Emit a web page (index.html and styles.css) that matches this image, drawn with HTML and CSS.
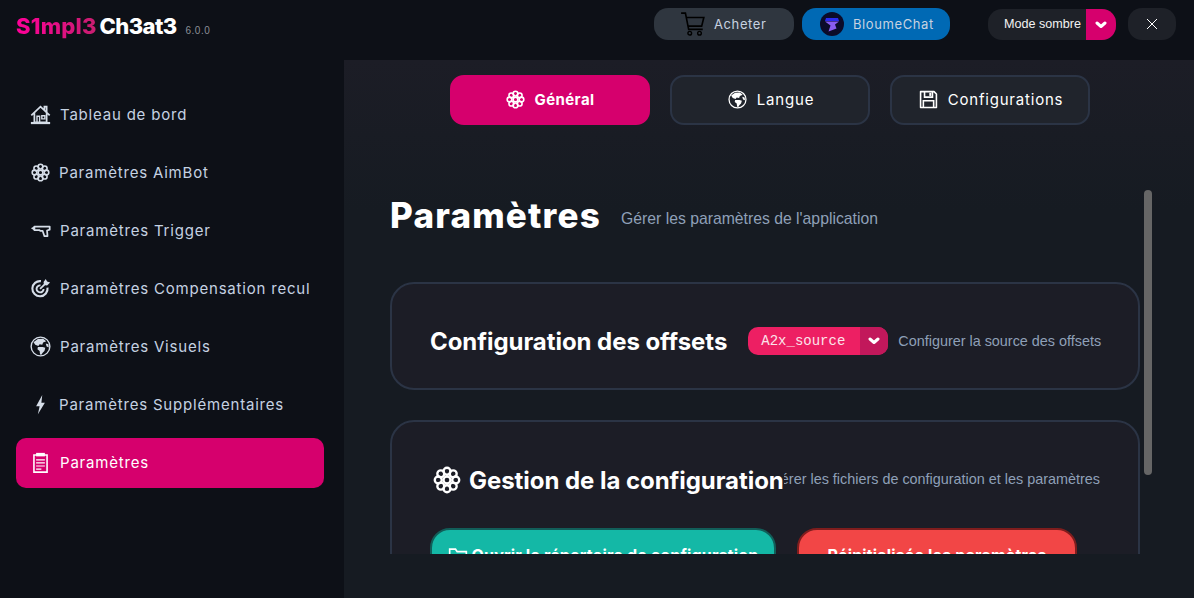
FILE: index.html
```html
<!DOCTYPE html>
<html lang="fr">
<head>
	<meta charset="utf-8" />
	<title>S1mpl3 Ch3at3</title>
	<link rel="stylesheet" href="styles.css">
</head>
<body>
	<svg class="sprites" width="0" height="0">
		<symbol id="flower" viewBox="0 0 24 24">
			<g fill="none" stroke="currentColor" stroke-width="2">
				<circle cx="12" cy="12" r="3"/>
				<circle cx="12" cy="4.500" r="3"/>
				<circle cx="12" cy="19.500" r="3"/>
				<circle cx="4.500" cy="12" r="3"/>
				<circle cx="19.500" cy="12" r="3"/>
				<circle cx="6.700" cy="6.700" r="3"/>
				<circle cx="17.300" cy="6.700" r="3"/>
				<circle cx="6.700" cy="17.300" r="3"/>
				<circle cx="17.300" cy="17.300" r="3"/>
			</g>
		</symbol>
		<symbol id="globe" viewBox="0 0 24 24">
			<circle cx="12" cy="12" r="10.700" fill="none" stroke="currentColor" stroke-width="1.600"/>
			<path fill="currentColor" d="M4 7 9 3.500l6-.5 3.500 3-3.500 1.500-1 2.500-3-.5-1.500 2L6 10zM9 12.500h5.500l3 1-1 3.500-2 2-1.500 2.500-1.500-.5-.5-4-2.500-2zM18 8.500l3 1 .5 3.500-2.500-1z"/>
		</symbol>
		<symbol id="chevron" viewBox="0 0 12 8">
			<path fill="none" stroke="currentColor" stroke-width="3" stroke-linecap="round" stroke-linejoin="round" d="M2 2l4 3.500L10 2"/>
		</symbol>
	</svg>

	<div class="app">
		<header class="topbar">
			<div class="brand">
				<span class="brand-pink">S1mpl3</span>
				<span class="brand-white">Ch3at3</span>
				<span class="brand-version">6.0.0</span>
			</div>
			<div class="top-actions">
				<a class="pill pill-grey">
					<svg class="cart" viewBox="0 0 24 24"><path fill="none" stroke="#000" stroke-width="1.500" d="M1 2h4l3 15h13M6 6h16l-2 8H7.500"/><circle cx="9" cy="20.500" r="1.700" fill="none" stroke="#000" stroke-width="1.300"/><circle cx="18" cy="20.500" r="1.700" fill="none" stroke="#000" stroke-width="1.300"/></svg>
					Acheter
				</a>
				<a class="pill pill-blue">
					<svg class="bloume" viewBox="0 0 24 24"><circle cx="12" cy="12" r="12" fill="#0b0b2a"/><path fill="#2b2bf0" d="M6 6h12l1 3H5z"/><path fill="#8a5cf0" d="M5 9.500h14l-4 3 1.500 4-8 3 2-6z"/></svg>
					BloumeChat
				</a>
				<div class="theme-select">
					<span class="theme-label">Mode sombre</span>
					<span class="theme-arrow"><svg class="chev"><use href="#chevron"/></svg></span>
				</div>
				<button class="close-btn">
					<svg width="12" height="12" viewBox="0 0 12 12"><path stroke="#fff" stroke-width="1" d="M1 1l10 10M11 1L1 11"/></svg>
				</button>
			</div>
		</header>

		<div class="body-row">
			<nav class="sidebar">
				<a class="nav-item">
					<svg class="nav-icon" viewBox="0 0 24 24"><path fill="none" stroke="currentColor" stroke-width="2" d="M1.500 13 12 3l10.500 10M5 10.500V21h14V10.500M16.500 6.500V3h2.500v6"/><path fill="currentColor" d="M1 20.500h22V23H1z"/><path fill="none" stroke="currentColor" stroke-width="1.600" d="M8 21v-7h3v7M13.500 13.500h3.500v3.500h-3.500z"/></svg>
					Tableau de bord
				</a>
				<a class="nav-item nudge">
					<svg class="nav-icon flower-thin"><use href="#flower"/></svg>
					Paramètres AimBot
				</a>
				<a class="nav-item">
					<svg class="nav-icon" viewBox="0 0 24 24"><path fill="none" stroke="currentColor" stroke-width="2" stroke-linejoin="round" d="M5 7.500h17.500V11l-3 1 .5 6.500h-3.500L14.500 12.500H12L10.500 11.500H5z"/><path fill="currentColor" d="M1 9.500l4-2.500v5z"/></svg>
					Paramètres Trigger
				</a>
				<a class="nav-item">
					<svg class="nav-icon" viewBox="0 0 24 24"><g fill="none" stroke="currentColor"><path stroke-width="2.400" d="M20 11a8.700 8.700 0 1 1-7.500-7.400"/><path stroke-width="2.200" d="M15.500 12.500a4 4 0 1 1-3.500-4"/><path stroke-width="2" d="M11.500 12.500l7-7"/></g><path fill="currentColor" d="M18 1l1.500 3L23 5l-3.500 3.500-3.500-.5-.5-3.500z"/></svg>
					Paramètres Compensation recul
				</a>
				<a class="nav-item">
					<svg class="nav-icon"><use href="#globe"/></svg>
					Paramètres Visuels
				</a>
				<a class="nav-item nudge">
					<svg class="nav-icon" viewBox="0 0 24 24"><path fill="currentColor" d="M14 1 7 14h4l-2 9 8-13h-4z"/></svg>
					Paramètres Supplémentaires
				</a>
				<a class="nav-item active">
					<svg class="nav-icon" viewBox="0 0 24 24"><path fill="none" stroke="currentColor" stroke-width="1.800" d="M4.500 3.500h15V23h-15z"/><path fill="currentColor" d="M7 1h10v4H7z"/><path stroke="currentColor" stroke-width="1.400" d="M7 9h10M7 12.500h10M7 16h10M7 19.500h6"/></svg>
					Paramètres
				</a>
			</nav>

			<main class="main">
				<div class="tabs">
					<a class="tab tab-active"><svg class="tab-icon"><use href="#flower"/></svg>Général</a>
					<a class="tab"><svg class="tab-icon"><use href="#globe"/></svg>Langue</a>
					<a class="tab">
						<svg class="tab-icon" viewBox="0 0 24 24"><path fill="none" stroke="currentColor" stroke-width="2" stroke-linejoin="round" d="M2 2h17l3 3v17H2z"/><path fill="none" stroke="currentColor" stroke-width="2" d="M7 2v7h10V2M5.500 22v-8.500h13V22"/><path fill="currentColor" d="M13 3.500h2.500v4H13z"/></svg>
						Configurations
					</a>
				</div>

				<div class="scroll-area">
					<div class="page-head">
						<h1>Paramètres</h1>
						<p class="muted">Gérer les paramètres de l'application</p>
					</div>

					<section class="card card-row">
						<h2>Configuration des offsets</h2>
						<div class="source-select">
							<span class="source-value">A2x_source</span>
							<span class="source-arrow"><svg class="chev"><use href="#chevron"/></svg></span>
						</div>
						<p class="muted small">Configurer la source des offsets</p>
					</section>

					<section class="card card-config">
						<div class="config-head">
							<h2 class="with-icon"><svg class="h2-icon"><use href="#flower"/></svg>Gestion de la configuration</h2>
							<p class="muted small clipped">Gérer les fichiers de configuration et les paramètres</p>
						</div>
						<div class="config-btns">
							<a class="action action-teal">
								<svg class="folder" viewBox="0 0 24 24"><path fill="none" stroke="#fff" stroke-width="2" d="M2 20V5h7l2 3h11v12z"/></svg>
								Ouvrir le répertoire de configuration
							</a>
							<a class="action action-red">Réinitialisée les paramètres</a>
						</div>
					</section>

					<div class="scrollbar"></div>
				</div>
			</main>
		</div>
	</div>
</body>
</html>
```
FILE: styles.css
```css
*{
	box-sizing: border-box;
}
html,body{
	margin: 0;
	padding: 0;
	height: 100%;
	overflow: hidden;
}
body{
	background-color: #0d1017;
	color: #fff;
	font-family: "Inter", "Liberation Sans", sans-serif;
}
h1,h2,p{
	margin: 0;
}
.sprites{
	position: absolute;
}
.app{
	height: 598px;
	display: flex;
	flex-direction: column;
}

/* top bar */
.topbar{
	height: 60px;
	flex: none;
	display: flex;
	justify-content: space-between;
	padding: 8px 18px 0 16px;
}
.brand{
	display: flex;
	align-items: baseline;
	padding-top: 5px;
	font-size: 22px;
	font-weight: 800;
	line-height: 26px;
}
.brand-pink{
	background: linear-gradient(90deg, #ff0099, #c71e6f);
	-webkit-background-clip: text;
	background-clip: text;
	color: transparent;
	letter-spacing: 0.2px;
}
.brand-white{
	margin-left: 3px;
	letter-spacing: -0.6px;
}
.brand-version{
	margin-left: 9px;
	font-family: "Liberation Sans", sans-serif;
	font-size: 10px;
	font-weight: 400;
	letter-spacing: 0.5px;
	color: #8b8f96;
}
.top-actions{
	display: flex;
	align-items: flex-start;
}
.pill{
	height: 32px;
	border-radius: 14px;
	display: flex;
	align-items: center;
	font-size: 13px;
	letter-spacing: 0.6px;
	color: #c7d2e0;
}
.pill-grey{
	width: 140px;
	background-color: #2f363f;
	padding-left: 26px;
	gap: 8px;
	margin-right: 8px;
}
.pill-blue{
	width: 148px;
	background-color: #0069b4;
	padding-left: 18px;
	gap: 9px;
	margin-right: 38px;
}
.cart{
	width: 26px;
	height: 26px;
}
.bloume{
	width: 24px;
	height: 24px;
}
.theme-select{
	width: 128px;
	height: 31px;
	margin-top: 1px;
	border-radius: 14px;
	background-color: #1e2128;
	display: flex;
	overflow: hidden;
	margin-right: 12px;
}
.theme-label{
	flex: 1;
	padding-left: 16px;
	line-height: 31px;
	font-family: "Liberation Sans", sans-serif;
	font-size: 12.600px;
	white-space: nowrap;
	color: #f2f2f2;
}
.theme-arrow{
	width: 30px;
	flex: none;
	background-color: #d6006d;
	display: flex;
	align-items: center;
	justify-content: center;
}
.chev{
	width: 12px;
	height: 8px;
	color: #fff;
}
.close-btn{
	width: 48px;
	height: 32px;
	padding: 0;
	border: 0;
	border-radius: 14px;
	background-color: #1e2128;
	display: flex;
	align-items: center;
	justify-content: center;
}

.body-row{
	flex: 1;
	display: flex;
	min-height: 0;
}

/* sidebar */
.sidebar{
	width: 344px;
	flex: none;
	padding: 29px 20px 0 16px;
	display: flex;
	flex-direction: column;
	gap: 8px;
}
.nav-item{
	height: 50px;
	flex: none;
	border-radius: 10px;
	padding-left: 14px;
	display: flex;
	align-items: center;
	gap: 9px;
	font-size: 15px;
	letter-spacing: 0.8px;
	color: #c5d2e2;
}
.nav-item.nudge{
	gap: 8px;
}
.nav-item.active{
	margin-top: 1px;
	padding-bottom: 2px;
	background-color: #d6006d;
	color: #fff;
}
.nav-icon{
	width: 21px;
	height: 21px;
	color: #d5dde8;
	flex: none;
}
.flower-thin{
	width: 19px;
	height: 19px;
	margin: 0 1px;
}
.active .nav-icon{
	color: #fff;
}

/* main */
.main{
	flex: 1;
	min-width: 0;
	background: linear-gradient(180deg, #1c1d26 0, #161b22 150px);
	display: flex;
	flex-direction: column;
}
.tabs{
	flex: none;
	padding: 15px 0 0 2px;
	display: flex;
	justify-content: center;
	gap: 20px;
}
.tab{
	width: 200px;
	height: 50px;
	padding: 0 0 2px 2px;
	border: 2px solid #2b3445;
	border-radius: 14px;
	background-color: #20242c;
	display: flex;
	align-items: center;
	justify-content: center;
	gap: 10px;
	font-size: 15px;
	letter-spacing: 0.8px;
}
.tab-active{
	padding-left: 0;
	background-color: #d6006d;
	border-color: #d6006d;
	font-weight: 700;
	letter-spacing: 0.4px;
}
.tab-icon{
	width: 19px;
	height: 19px;
}

.scroll-area{
	position: relative;
	height: 429px;
	padding: 65px 54px 0 46px;
	overflow: hidden;
}
.page-head{
	display: flex;
	align-items: center;
	gap: 20px;
	height: 50px;
	margin-bottom: 42px;
}
.page-head .muted{
	padding-top: 8px;
}
h1{
	font-size: 35px;
	font-weight: 800;
	letter-spacing: 1.200px;
	line-height: 50px;
}
.muted{
	font-family: "Liberation Sans", sans-serif;
	font-size: 15.750px;
	white-space: nowrap;
	color: #8fa0b8;
}
.muted.small{
	font-size: 14.400px;
}
.card{
	border: 2px solid #2b3445;
	border-radius: 24px;
	background-color: #1c1d26;
	margin-bottom: 30px;
}
.card-row{
	height: 108px;
	padding: 10px 38px 0;
	display: flex;
	align-items: center;
}
h2{
	font-size: 24px;
	font-weight: 700;
	letter-spacing: -0.05px;
	white-space: nowrap;
}
.source-select{
	width: 140px;
	height: 28px;
	margin-left: 21px;
	margin-right: 10px;
	border-radius: 10px;
	overflow: hidden;
	display: flex;
	flex: none;
	background-color: #ed1f63;
}
.source-value{
	flex: 1;
	padding-left: 13px;
	line-height: 28px;
	font-family: "Liberation Mono", monospace;
	font-size: 14px;
	color: #fbe3ea;
}
.source-arrow{
	width: 28px;
	background-color: #c2185b;
	display: flex;
	align-items: center;
	justify-content: center;
}
.card-config{
	padding: 38px 38px 0;
	height: 240px;
}
.config-head{
	display: flex;
	align-items: center;
	height: 40px;
}
.with-icon{
	display: flex;
	align-items: center;
	gap: 8px;
	flex: none;
	padding-left: 3px;
	position: relative;
	z-index: 1;
	background-color: #1c1d26;
}
.h2-icon{
	width: 28px;
	height: 28px;
}
.clipped{
	flex: 1;
	min-width: 0;
	display: flex;
	justify-content: flex-end;
	padding-bottom: 2px;
}
.config-btns{
	margin-top: 28px;
	display: flex;
	gap: 21px;
}
.action{
	height: 54px;
	border: 2px solid;
	border-radius: 20px;
	display: flex;
	align-items: center;
	justify-content: center;
	gap: 4px;
	font-size: 16px;
	font-weight: 700;
	letter-spacing: 0.15px;
	white-space: nowrap;
}
.action-teal{
	width: 346px;
	background-color: #14b8a6;
	border-color: #115e59;
}
.action-red{
	width: 280px;
	background-color: #f24646;
	border-color: #7f1d1d;
}
.folder{
	width: 20px;
	height: 20px;
}
.scrollbar{
	position: absolute;
	top: 65px;
	left: 800px;
	width: 8px;
	height: 285px;
	border-radius: 4px;
	background-color: #666;
}
```
